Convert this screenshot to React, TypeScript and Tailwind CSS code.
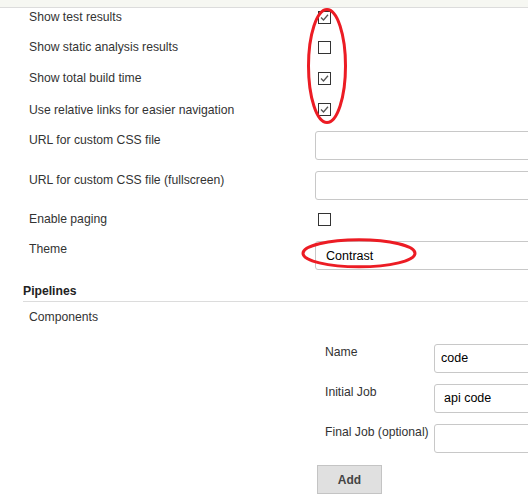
import React from "react";

function Check({ checked }: { checked: boolean }) {
  return (
    <div className="mt-[2px] ml-[3px] w-[13px] h-[13px] border border-[#333] bg-white box-border relative">
      {checked && (
        <svg viewBox="0 0 13 13" className="absolute -left-px -top-px w-[13px] h-[13px]">
          <path d="M3 6.5 L5.5 9 L10 3.8" fill="none" stroke="#555" strokeWidth="1.3" />
        </svg>
      )}
    </div>
  );
}

function Input({ value, pad }: { value?: string; pad?: string }) {
  return (
    <div
      className={
        "h-[29px] w-[260px] shrink-0 border border-[#c8c8c8] rounded-[3px] bg-white box-border flex items-center text-[12.5px] text-black " +
        (pad ?? "pl-[9px]")
      }
    >
      {value}
    </div>
  );
}

export default function App() {
  const label = "w-[315px] shrink-0 pl-[29px] leading-[16px]";
  return (
    <div
      className="relative w-[528px] h-[501px] overflow-hidden bg-white text-[12.2px] text-[#333]"
      style={{ fontFamily: '"Liberation Sans", Arial, sans-serif' }}
    >
      <div className="h-[8px] bg-[#f6f7f2] border-b border-[#dcdcdc] box-border" />
      <div className="pt-px">
        <div className="flex h-[30px]">
          <div className={label}>Show test results</div>
          <Check checked />
        </div>
        <div className="flex h-[31px]">
          <div className={label}>Show static analysis results</div>
          <Check checked={false} />
        </div>
        <div className="flex h-[31px]">
          <div className={label}>Show total build time</div>
          <Check checked />
        </div>
        <div className="flex h-[30px]">
          <div className={label + " pt-px"}>Use relative links for easier navigation</div>
          <Check checked />
        </div>
        <div className="flex h-[40px]">
          <div className={label + " pt-px"}>URL for custom CSS file</div>
          <Input />
        </div>
        <div className="flex h-[40px]">
          <div className={label + " pt-px"}>URL for custom CSS file (fullscreen)</div>
          <Input />
        </div>
        <div className="flex h-[29px]">
          <div className={label}>Enable paging</div>
          <Check checked={false} />
        </div>
        <div className="flex h-[42px]">
          <div className={label + " pt-px"}>Theme</div>
          <div className="mt-px">
            <Input value="Contrast" pad="pl-[10px] pt-px" />
          </div>
        </div>
        <div className="ml-[23px] h-[20px] pt-px border-b border-[#dcdcdc] box-border font-bold leading-[16px] text-[#222]">
          Pipelines
        </div>
        <div className="h-[42px] pt-[7px] pl-[29px] leading-[16px]">Components</div>
        <div className="pl-[325px]">
          <div className="flex h-[40px]">
            <div className="w-[109px] shrink-0 leading-[16px]">Name</div>
            <Input value="code" pad="pl-[6px]" />
          </div>
          <div className="flex h-[40px]">
            <div className="w-[109px] shrink-0 leading-[16px]">Initial Job</div>
            <Input value="api code" pad="pl-[9px]" />
          </div>
          <div className="flex h-[41px]">
            <div className="w-[109px] shrink-0 leading-[16px] whitespace-nowrap">Final Job (optional)</div>
            <Input />
          </div>
        </div>
        <div className="pl-[317px]">
          <button className="w-[65px] h-[29px] bg-[#e0e0e0] border border-[#c4c4c4] box-border font-bold text-[#444] text-[12px]">
            Add
          </button>
        </div>
      </div>
      <svg className="absolute left-0 top-0 pointer-events-none" width="528" height="501">
        <ellipse cx="327" cy="66" rx="18.5" ry="56.5" fill="none" stroke="#ec1c24" strokeWidth="3" />
        <ellipse cx="359" cy="253.3" rx="56" ry="13.5" fill="none" stroke="#ec1c24" strokeWidth="3" />
      </svg>
    </div>
  );
}
